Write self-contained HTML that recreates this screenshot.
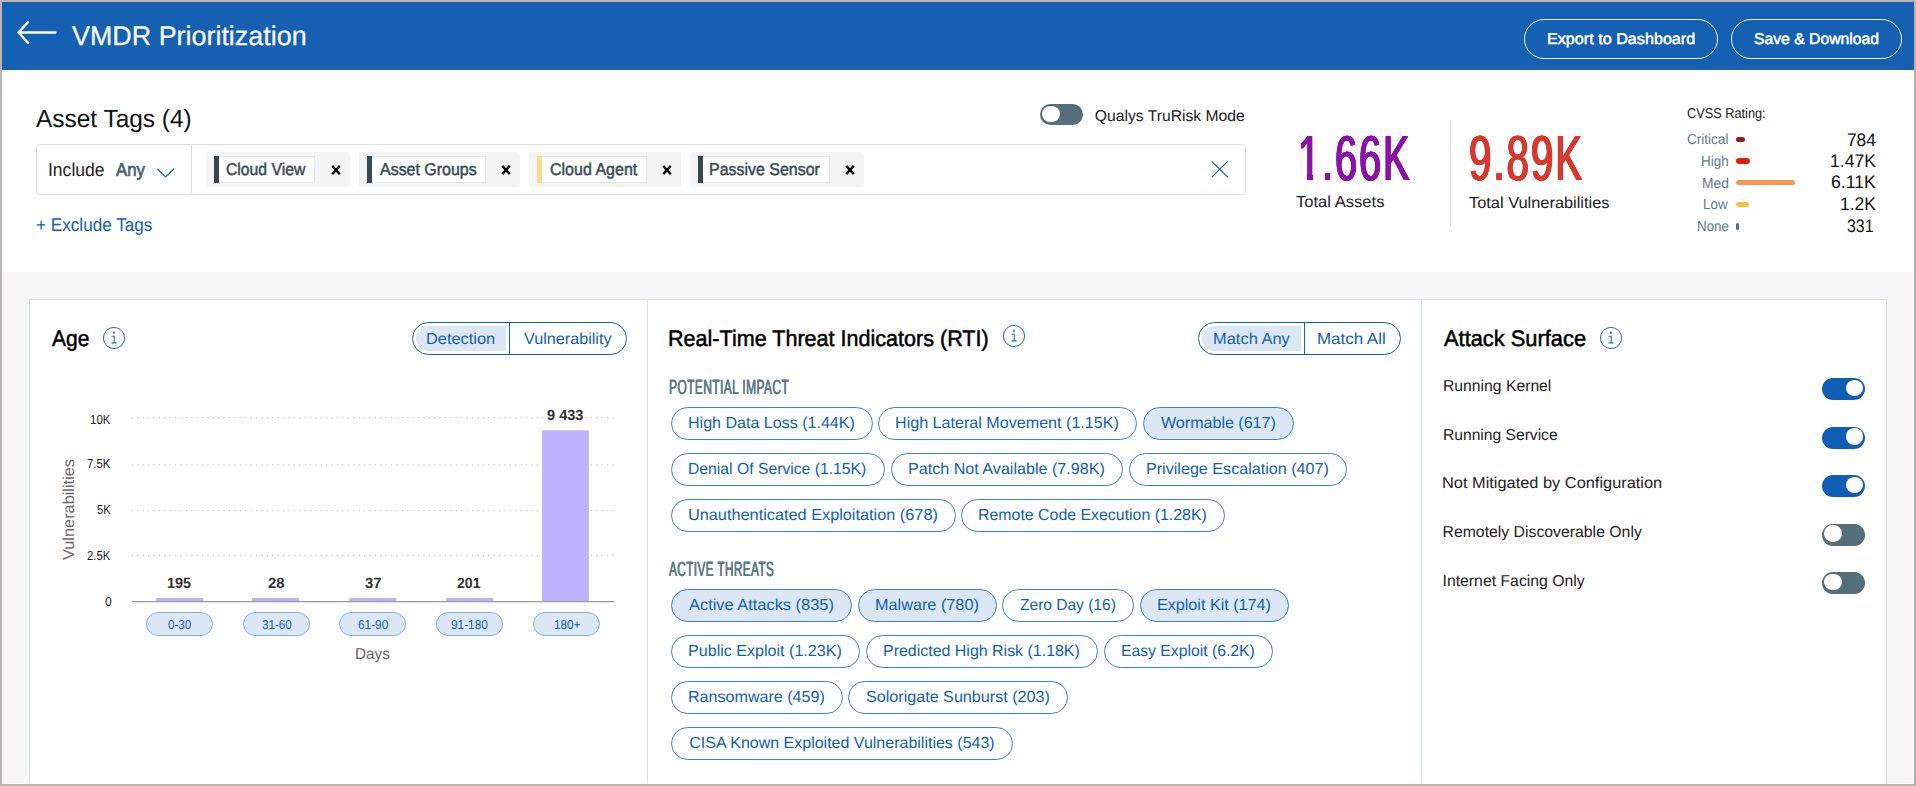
<!DOCTYPE html>
<html lang="en">
<head>
<meta charset="utf-8">
<title>VMDR Prioritization</title>
<style>
html,body{margin:0;padding:0;}
html{width:1916px;height:786px;overflow:hidden;}
body{width:1916px;height:786px;overflow:hidden;position:relative;background:#f6f6f6;font-family:"Liberation Sans", sans-serif;}
.a{position:absolute;box-sizing:border-box;}
.t{position:absolute;white-space:pre;margin:0;padding:0;text-rendering:geometricPrecision;}
svg{position:absolute;overflow:visible;}
</style>
</head>
<body>
<div class="a" style="left:0px;top:0px;width:1916px;height:786px;background:#f6f6f6;"></div>
<div class="a" style="left:2px;top:70px;width:1912px;height:202px;background:#fff;"></div>
<div class="a" style="left:2px;top:2px;width:1912px;height:68px;background:#1560b0;"></div>
<svg style="left:0;top:0" width="80" height="70"><path d="M55.4 32.5H18.6M28 22.3L18.5 32.5L28 42.8" fill="none" stroke="#fff" stroke-width="2.4" stroke-linecap="round" stroke-linejoin="miter"/></svg>
<div class="a" style="left:1524px;top:19px;width:194px;height:40px;border:1px solid rgba(255,255,255,.92);border-radius:20px;"></div>
<div class="a" style="left:1731px;top:19px;width:171px;height:40px;border:1px solid rgba(255,255,255,.92);border-radius:20px;"></div>
<div class="a" style="left:36px;top:144px;width:1210px;height:51px;background:#fff;border:1px solid #dedede;border-radius:4px;"></div>
<div class="a" style="left:191px;top:145px;width:1px;height:49px;background:#dedede;"></div>
<svg style="left:150px;top:160px" width="30" height="24"><path d="M7.6 9.2L15.6 17L23.6 9.2" fill="none" stroke="#1a60b5" stroke-width="1.25" stroke-linecap="round"/></svg>
<div class="a" style="left:206px;top:152px;width:144px;height:35px;background:#f4f4f4;border-radius:3px;"></div>
<div class="a" style="left:214px;top:156px;width:5px;height:27px;background:#37474f;"></div>
<div class="a" style="left:219px;top:156px;width:96px;height:27px;background:#fff;border:1px solid #e3e8eb;border-left:none;"></div>
<svg style="left:327.5px;top:161.6px" width="16" height="16"><path d="M4.2 3.9L11.8 12.1M11.8 3.9L4.2 12.1" fill="none" stroke="#0a0a0a" stroke-width="2.4"/></svg>
<div class="a" style="left:359px;top:152px;width:161px;height:35px;background:#f4f4f4;border-radius:3px;"></div>
<div class="a" style="left:367px;top:156px;width:5px;height:27px;background:#37474f;"></div>
<div class="a" style="left:372px;top:156px;width:114px;height:27px;background:#fff;border:1px solid #e3e8eb;border-left:none;"></div>
<svg style="left:497.5px;top:161.6px" width="16" height="16"><path d="M4.2 3.9L11.8 12.1M11.8 3.9L4.2 12.1" fill="none" stroke="#0a0a0a" stroke-width="2.4"/></svg>
<div class="a" style="left:529px;top:152px;width:152px;height:35px;background:#f4f4f4;border-radius:3px;"></div>
<div class="a" style="left:537px;top:156px;width:5px;height:27px;background:#fbdc8e;"></div>
<div class="a" style="left:542px;top:156px;width:105px;height:27px;background:#fff;border:1px solid #e3e8eb;border-left:none;"></div>
<svg style="left:658.5px;top:161.6px" width="16" height="16"><path d="M4.2 3.9L11.8 12.1M11.8 3.9L4.2 12.1" fill="none" stroke="#0a0a0a" stroke-width="2.4"/></svg>
<div class="a" style="left:690px;top:152px;width:174px;height:35px;background:#f4f4f4;border-radius:3px;"></div>
<div class="a" style="left:698px;top:156px;width:5px;height:27px;background:#37474f;"></div>
<div class="a" style="left:703px;top:156px;width:127px;height:27px;background:#fff;border:1px solid #e3e8eb;border-left:none;"></div>
<svg style="left:841.5px;top:161.6px" width="16" height="16"><path d="M4.2 3.9L11.8 12.1M11.8 3.9L4.2 12.1" fill="none" stroke="#0a0a0a" stroke-width="2.4"/></svg>
<svg style="left:1205px;top:155px" width="30" height="30"><path d="M6.8 6.3L22.7 22.2M22.7 6.3L6.8 22.2" fill="none" stroke="#1a60b5" stroke-width="1.15"/></svg>
<div class="a" style="left:1040px;top:104px;width:43px;height:21px;background:#546e7a;border-radius:10.5px;"></div>
<div class="a" style="left:1042.4px;top:105.9px;width:17.2px;height:16.4px;background:#fff;border-radius:50%;"></div>
<div class="a" style="left:1450px;top:120px;width:1px;height:106px;background:#dcdcdc;"></div>
<div class="a" style="left:1736px;top:137px;width:9.25px;height:5px;background:#8b1a1a;border-radius:3px;"></div>
<div class="a" style="left:1736px;top:158.25px;width:14px;height:6px;background:#e0200e;border-radius:3px;"></div>
<div class="a" style="left:1736px;top:179.75px;width:59px;height:5.5px;background:#f5974e;border-radius:3px;"></div>
<div class="a" style="left:1736px;top:201.75px;width:13px;height:5.5px;background:#f3c544;border-radius:3px;"></div>
<div class="a" style="left:1736px;top:223px;width:3.2px;height:6.5px;background:#546e7a;border-radius:3px;"></div>
<div class="a" style="left:29px;top:299px;width:1858px;height:487px;background:#fff;border:1px solid #d7e0e7;border-bottom:none;"></div>
<div class="a" style="left:647px;top:300px;width:1px;height:486px;background:#d7e0e7;"></div>
<div class="a" style="left:1421px;top:300px;width:1px;height:486px;background:#d7e0e7;"></div>
<svg style="left:100.55px;top:325.15px" width="26" height="26"><circle cx="13" cy="13" r="10.6" fill="none" stroke="#2a6cbd" stroke-width="1"/><path d="M10.6 11.3h2.6v6.6M10.5 17.9h5.2" fill="none" stroke="#2a6cbd" stroke-width="1.1"/><rect x="11.9" y="6.7" width="2" height="2" fill="#2a6cbd"/></svg>
<div class="a" style="left:412px;top:322px;width:215px;height:33px;background:#fff;border:1px solid #125fb5;border-radius:16.5px;"></div>
<div class="a" style="left:416px;top:326px;width:90px;height:25px;background:#dbe7f4;border-radius:12.5px 0 0 12.5px;"></div>
<div class="a" style="left:509px;top:322px;width:1px;height:33px;background:#125fb5;"></div>
<svg style="left:0;top:0" width="1916" height="786"><path d="M131.7 417.7H613.5" stroke="#c3cdd4" stroke-width="1.3" stroke-dasharray="1.3 4.1" fill="none"/><path d="M131.7 464.8H613.5" stroke="#c3cdd4" stroke-width="1.3" stroke-dasharray="1.3 4.1" fill="none"/><path d="M131.7 510.6H613.5" stroke="#c3cdd4" stroke-width="1.3" stroke-dasharray="1.3 4.1" fill="none"/><path d="M131.7 555.5H613.5" stroke="#c3cdd4" stroke-width="1.3" stroke-dasharray="1.3 4.1" fill="none"/><rect x="156.2" y="598" width="47" height="3.2999999999999545" fill="#bdb2fb"/><rect x="252" y="598" width="47" height="3.2999999999999545" fill="#bdb2fb"/><rect x="349.2" y="598" width="47" height="3.2999999999999545" fill="#bdb2fb"/><rect x="446.2" y="598" width="47" height="3.2999999999999545" fill="#bdb2fb"/><rect x="542" y="430.3" width="46.8" height="170.99999999999994" fill="#bdb2fb"/><path d="M132 601.7H614.5" stroke="#9a9a9a" stroke-width="1.3" fill="none"/></svg>
<div class="a" style="left:146.2px;top:612px;width:67px;height:24px;background:#dbe7f4;border:1px solid #8db2de;border-radius:12px;"></div>
<div class="a" style="left:243px;top:612px;width:67px;height:24px;background:#dbe7f4;border:1px solid #8db2de;border-radius:12px;"></div>
<div class="a" style="left:339.2px;top:612px;width:67px;height:24px;background:#dbe7f4;border:1px solid #8db2de;border-radius:12px;"></div>
<div class="a" style="left:436.2px;top:612px;width:67px;height:24px;background:#dbe7f4;border:1px solid #8db2de;border-radius:12px;"></div>
<div class="a" style="left:533px;top:612px;width:67px;height:24px;background:#dbe7f4;border:1px solid #8db2de;border-radius:12px;"></div>
<svg style="left:1001px;top:323px" width="26" height="26"><circle cx="13" cy="13" r="10.6" fill="none" stroke="#2a6cbd" stroke-width="1"/><path d="M10.6 11.3h2.6v6.6M10.5 17.9h5.2" fill="none" stroke="#2a6cbd" stroke-width="1.1"/><rect x="11.9" y="6.7" width="2" height="2" fill="#2a6cbd"/></svg>
<div class="a" style="left:1198px;top:322px;width:203px;height:33px;background:#fff;border:1px solid #125fb5;border-radius:16.5px;"></div>
<div class="a" style="left:1202px;top:326px;width:99px;height:25px;background:#dbe7f4;border-radius:12.5px 0 0 12.5px;"></div>
<div class="a" style="left:1304px;top:322px;width:1px;height:33px;background:#125fb5;"></div>
<div class="a" style="left:671px;top:407px;width:202px;height:33px;background:#fff;border:1px solid #3f80c6;border-radius:16.5px;"></div>
<div class="a" style="left:878px;top:407px;width:259px;height:33px;background:#fff;border:1px solid #3f80c6;border-radius:16.5px;"></div>
<div class="a" style="left:1143px;top:407px;width:151px;height:33px;background:#dbe7f4;border:1px solid #3f80c6;border-radius:16.5px;"></div>
<div class="a" style="left:671px;top:453px;width:213.5px;height:33px;background:#fff;border:1px solid #3f80c6;border-radius:16.5px;"></div>
<div class="a" style="left:891px;top:453px;width:232px;height:33px;background:#fff;border:1px solid #3f80c6;border-radius:16.5px;"></div>
<div class="a" style="left:1129px;top:453px;width:218px;height:33px;background:#fff;border:1px solid #3f80c6;border-radius:16.5px;"></div>
<div class="a" style="left:671px;top:499px;width:285px;height:33px;background:#fff;border:1px solid #3f80c6;border-radius:16.5px;"></div>
<div class="a" style="left:961px;top:499px;width:264px;height:33px;background:#fff;border:1px solid #3f80c6;border-radius:16.5px;"></div>
<div class="a" style="left:671px;top:589px;width:181px;height:33px;background:#dbe7f4;border:1px solid #3f80c6;border-radius:16.5px;"></div>
<div class="a" style="left:858px;top:589px;width:139px;height:33px;background:#dbe7f4;border:1px solid #3f80c6;border-radius:16.5px;"></div>
<div class="a" style="left:1002px;top:589px;width:132px;height:33px;background:#fff;border:1px solid #3f80c6;border-radius:16.5px;"></div>
<div class="a" style="left:1140px;top:589px;width:149px;height:33px;background:#dbe7f4;border:1px solid #3f80c6;border-radius:16.5px;"></div>
<div class="a" style="left:671px;top:635px;width:189px;height:33px;background:#fff;border:1px solid #3f80c6;border-radius:16.5px;"></div>
<div class="a" style="left:866px;top:635px;width:232px;height:33px;background:#fff;border:1px solid #3f80c6;border-radius:16.5px;"></div>
<div class="a" style="left:1104px;top:635px;width:169px;height:33px;background:#fff;border:1px solid #3f80c6;border-radius:16.5px;"></div>
<div class="a" style="left:671px;top:681px;width:172px;height:33px;background:#fff;border:1px solid #3f80c6;border-radius:16.5px;"></div>
<div class="a" style="left:848px;top:681px;width:220px;height:33px;background:#fff;border:1px solid #3f80c6;border-radius:16.5px;"></div>
<div class="a" style="left:671px;top:727px;width:342px;height:33px;background:#fff;border:1px solid #3f80c6;border-radius:16.5px;"></div>
<svg style="left:1597.5px;top:325.3px" width="26" height="26"><circle cx="13" cy="13" r="10.6" fill="none" stroke="#2a6cbd" stroke-width="1"/><path d="M10.6 11.3h2.6v6.6M10.5 17.9h5.2" fill="none" stroke="#2a6cbd" stroke-width="1.1"/><rect x="11.9" y="6.7" width="2" height="2" fill="#2a6cbd"/></svg>
<div class="a" style="left:1822px;top:378px;width:43px;height:22px;background:#0f5eb5;border-radius:11.0px;"></div>
<div class="a" style="left:1846px;top:379.9px;width:17.2px;height:16.4px;background:#fff;border-radius:50%;"></div>
<div class="a" style="left:1822px;top:426.5px;width:43px;height:22px;background:#0f5eb5;border-radius:11.0px;"></div>
<div class="a" style="left:1846px;top:428.4px;width:17.2px;height:16.4px;background:#fff;border-radius:50%;"></div>
<div class="a" style="left:1822px;top:475px;width:43px;height:22px;background:#0f5eb5;border-radius:11.0px;"></div>
<div class="a" style="left:1846px;top:476.9px;width:17.2px;height:16.4px;background:#fff;border-radius:50%;"></div>
<div class="a" style="left:1822px;top:523.5px;width:43px;height:22px;background:#546e7a;border-radius:11.0px;"></div>
<div class="a" style="left:1824.4px;top:525.4px;width:17.2px;height:16.4px;background:#fff;border-radius:50%;"></div>
<div class="a" style="left:1822px;top:572px;width:43px;height:22px;background:#546e7a;border-radius:11.0px;"></div>
<div class="a" style="left:1824.4px;top:573.9px;width:17.2px;height:16.4px;background:#fff;border-radius:50%;"></div>
<div class="a" style="left:2px;top:272px;width:1px;height:512px;background:#fcfcfc;"></div>
<div class="a" style="left:1913px;top:272px;width:1px;height:512px;background:#fcfcfc;"></div>
<div class="a" style="left:2px;top:783px;width:1912px;height:1px;background:#fcfcfc;"></div>
<div class="a" style="left:0px;top:0px;width:1916px;height:2px;background:#b9b4b2;"></div>
<div class="a" style="left:0px;top:0px;width:2px;height:786px;background:#b9b4b2;"></div>
<div class="a" style="left:1914px;top:0px;width:2px;height:786px;background:#b7b3b1;"></div>
<div class="a" style="left:0px;top:784px;width:1916px;height:2px;background:#b7b3b1;"></div>
<div class="t" style="left:72.00px;top:21.00px;font-size:26.9px;line-height:30px;color:#f6f6f6;-webkit-text-stroke:0.3px #f6f6f6;">VMDR Prioritization</div>
<div class="t" style="left:1546.56px;top:31.00px;font-size:15.6px;line-height:17px;color:#fff;-webkit-text-stroke:0.5px #fff;transform-origin:0 0;transform:scaleX(1.0364);">Export to Dashboard</div>
<div class="t" style="left:1753.80px;top:31.00px;font-size:15.6px;line-height:17px;color:#fff;-webkit-text-stroke:0.5px #fff;transform-origin:0 0;transform:scaleX(1.0090);">Save &amp; Download</div>
<div class="t" style="left:36.30px;top:106.00px;font-size:24.8px;line-height:27px;color:#111;transform-origin:0 0;transform:scaleX(0.9855);">Asset Tags (4)</div>
<div class="t" style="left:47.61px;top:159.00px;font-size:18.6px;line-height:21px;color:#222;transform-origin:0 0;transform:scaleX(0.9426);">Include</div>
<div class="t" style="left:116.30px;top:159.00px;font-size:18.6px;line-height:21px;color:#4a5f6d;-webkit-text-stroke:0.7px #4a5f6d;transform-origin:0 0;transform:scaleX(0.9040);">Any</div>
<div class="t" style="left:225.80px;top:160.00px;font-size:17px;line-height:19px;color:#3b4c58;-webkit-text-stroke:0.5px #3b4c58;transform-origin:0 0;transform:scaleX(0.9259);">Cloud View</div>
<div class="t" style="left:379.80px;top:160.00px;font-size:17px;line-height:19px;color:#3b4c58;-webkit-text-stroke:0.5px #3b4c58;transform-origin:0 0;transform:scaleX(0.9391);">Asset Groups</div>
<div class="t" style="left:549.80px;top:160.00px;font-size:17px;line-height:19px;color:#3b4c58;-webkit-text-stroke:0.5px #3b4c58;transform-origin:0 0;transform:scaleX(0.9418);">Cloud Agent</div>
<div class="t" style="left:709.36px;top:160.00px;font-size:17px;line-height:19px;color:#3b4c58;-webkit-text-stroke:0.5px #3b4c58;transform-origin:0 0;transform:scaleX(0.9387);">Passive Sensor</div>
<div class="t" style="left:35.50px;top:214.00px;font-size:18.4px;line-height:21px;color:#125fb5;transform-origin:0 0;transform:scaleX(0.9318);">+ Exclude Tags</div>
<div class="t" style="left:1094.80px;top:108.00px;font-size:15.7px;line-height:17px;color:#222;">Qualys TruRisk Mode</div>
<div class="t" style="left:1297.57px;top:124.00px;font-size:63.5px;line-height:70px;color:#8a12a6;letter-spacing:3px;text-shadow:0.42px 0 0 #8a12a6,-0.42px 0 0 #8a12a6,0.83px 0 0 #8a12a6,-0.83px 0 0 #8a12a6,1.25px 0 0 #8a12a6,-1.25px 0 0 #8a12a6;transform-origin:0 0;transform:scaleX(0.6275);">1.66K</div>
<div class="t" style="left:1296.05px;top:194.00px;font-size:16px;line-height:17px;color:#222;transform-origin:0 0;transform:scaleX(1.0366);">Total Assets</div>
<div class="t" style="left:1469.32px;top:124.00px;font-size:63.5px;line-height:70px;color:#d8392f;letter-spacing:3px;text-shadow:0.42px 0 0 #d8392f,-0.42px 0 0 #d8392f,0.83px 0 0 #d8392f,-0.83px 0 0 #d8392f,1.25px 0 0 #d8392f,-1.25px 0 0 #d8392f;transform-origin:0 0;transform:scaleX(0.6359);">9.89K</div>
<div class="t" style="left:1468.80px;top:195.00px;font-size:16px;line-height:17px;color:#222;transform-origin:0 0;transform:scaleX(1.0236);">Total Vulnerabilities</div>
<div class="t" style="left:1687.30px;top:106.00px;font-size:14.2px;line-height:16px;color:#222;transform-origin:0 0;transform:scaleX(0.8979);">CVSS Rating:</div>
<div class="t" style="left:1687.30px;top:132.00px;font-size:14.4px;line-height:16px;color:#607d8b;transform-origin:0 0;transform:scaleX(0.9423);">Critical</div>
<div class="t" style="left:1847.30px;top:130.00px;font-size:18.2px;line-height:20px;color:#111;transform-origin:0 0;transform:scaleX(0.9510);">784</div>
<div class="t" style="left:1700.86px;top:154.00px;font-size:14.4px;line-height:16px;color:#607d8b;transform-origin:0 0;transform:scaleX(0.9355);">High</div>
<div class="t" style="left:1830.34px;top:151.00px;font-size:18.2px;line-height:20px;color:#111;transform-origin:0 0;transform:scaleX(0.9645);">1.47K</div>
<div class="t" style="left:1701.59px;top:176.00px;font-size:14.4px;line-height:16px;color:#607d8b;transform-origin:0 0;transform:scaleX(0.9633);">Med</div>
<div class="t" style="left:1831.30px;top:172.00px;font-size:18.2px;line-height:20px;color:#111;transform-origin:0 0;transform:scaleX(0.9718);">6.11K</div>
<div class="t" style="left:1703.37px;top:197.00px;font-size:14.4px;line-height:16px;color:#607d8b;transform-origin:0 0;transform:scaleX(0.9324);">Low</div>
<div class="t" style="left:1840.34px;top:194.00px;font-size:18.2px;line-height:20px;color:#111;transform-origin:0 0;transform:scaleX(0.9577);">1.2K</div>
<div class="t" style="left:1696.62px;top:219.00px;font-size:14.4px;line-height:16px;color:#607d8b;transform-origin:0 0;transform:scaleX(0.9282);">None</div>
<div class="t" style="left:1847.30px;top:216.00px;font-size:18.2px;line-height:20px;color:#111;transform-origin:0 0;transform:scaleX(0.8766);">331</div>
<div class="t" style="left:51.50px;top:326.00px;font-size:22.5px;line-height:25px;color:#000;-webkit-text-stroke:0.5px #000;transform-origin:0 0;transform:scaleX(0.9337);">Age</div>
<div class="t" style="left:426.28px;top:331.00px;font-size:16px;line-height:17px;color:#125fb5;transform-origin:0 0;transform:scaleX(1.0229);">Detection</div>
<div class="t" style="left:524.00px;top:331.00px;font-size:16px;line-height:17px;color:#125fb5;transform-origin:0 0;transform:scaleX(1.0108);">Vulnerability</div>
<div class="t" style="left:90.30px;top:412.00px;font-size:13px;line-height:15px;color:#222;transform-origin:0 0;transform:scaleX(0.8824);">10K</div>
<div class="t" style="left:87.30px;top:456.00px;font-size:13px;line-height:15px;color:#222;transform-origin:0 0;transform:scaleX(0.8755);">7.5K</div>
<div class="t" style="left:97.00px;top:502.00px;font-size:13px;line-height:15px;color:#222;transform-origin:0 0;transform:scaleX(0.8626);">5K</div>
<div class="t" style="left:87.30px;top:548.00px;font-size:13px;line-height:15px;color:#222;transform-origin:0 0;transform:scaleX(0.8755);">2.5K</div>
<div class="t" style="left:104.50px;top:594.00px;font-size:13px;line-height:15px;color:#222;transform-origin:0 0;transform:scaleX(0.9286);">0</div>
<div class="t" style="left:73.80px;top:547.00px;font-size:16px;line-height:17px;color:#6a6a6a;transform-origin:0.00px 13px;transform:rotate(-90deg) scaleX(1.0200);">Vulnerabilities</div>
<div class="t" style="left:167.30px;top:576.00px;font-size:14.8px;line-height:16px;color:#333;font-weight:700;transform-origin:0 0;transform:scaleX(0.9731);">195</div>
<div class="t" style="left:267.75px;top:576.00px;font-size:14.8px;line-height:16px;color:#333;font-weight:700;transform-origin:0 0;transform:scaleX(1.0044);">28</div>
<div class="t" style="left:364.75px;top:576.00px;font-size:14.8px;line-height:16px;color:#333;font-weight:700;transform-origin:0 0;transform:scaleX(1.0044);">37</div>
<div class="t" style="left:456.85px;top:576.00px;font-size:14.8px;line-height:16px;color:#333;font-weight:700;transform-origin:0 0;transform:scaleX(0.9526);">201</div>
<div class="t" style="left:547.30px;top:408.00px;font-size:14.8px;line-height:16px;color:#333;font-weight:700;transform-origin:0 0;transform:scaleX(0.9837);">9 433</div>
<div class="t" style="left:168.10px;top:617.00px;font-size:13px;line-height:15px;color:#125fb5;transform-origin:0 0;transform:scaleX(0.8919);">0-30</div>
<div class="t" style="left:261.60px;top:617.00px;font-size:13px;line-height:15px;color:#125fb5;transform-origin:0 0;transform:scaleX(0.8965);">31-60</div>
<div class="t" style="left:357.60px;top:617.00px;font-size:13px;line-height:15px;color:#125fb5;transform-origin:0 0;transform:scaleX(0.9086);">61-90</div>
<div class="t" style="left:451.30px;top:617.00px;font-size:13px;line-height:15px;color:#125fb5;transform-origin:0 0;transform:scaleX(0.9093);">91-180</div>
<div class="t" style="left:553.50px;top:617.00px;font-size:13px;line-height:15px;color:#125fb5;transform-origin:0 0;transform:scaleX(0.8993);">180+</div>
<div class="t" style="left:355.13px;top:646.00px;font-size:15.8px;line-height:17px;color:#666;transform-origin:0 0;transform:scaleX(0.9689);">Days</div>
<div class="t" style="left:668.34px;top:326.00px;font-size:22.5px;line-height:25px;color:#000;-webkit-text-stroke:0.5px #000;transform-origin:0 0;transform:scaleX(0.9582);">Real-Time Threat Indicators (RTI)</div>
<div class="t" style="left:1212.52px;top:331.00px;font-size:16px;line-height:17px;color:#125fb5;transform-origin:0 0;transform:scaleX(1.0278);">Match Any</div>
<div class="t" style="left:1317.49px;top:331.00px;font-size:16px;line-height:17px;color:#125fb5;transform-origin:0 0;transform:scaleX(1.0575);">Match All</div>
<div class="t" style="left:668.89px;top:376.00px;font-size:20.6px;line-height:23px;color:#5f7b89;letter-spacing:0.6px;text-shadow:0.30px 0 0 #5f7b89,-0.30px 0 0 #5f7b89;transform-origin:0 0;transform:scaleX(0.5851);">POTENTIAL IMPACT</div>
<div class="t" style="left:669.47px;top:558.00px;font-size:20.6px;line-height:23px;color:#5f7b89;letter-spacing:0.6px;text-shadow:0.30px 0 0 #5f7b89,-0.30px 0 0 #5f7b89;transform-origin:0 0;transform:scaleX(0.5756);">ACTIVE THREATS</div>
<div class="t" style="left:688.30px;top:415.00px;font-size:16px;line-height:17px;color:#125fb5;transform-origin:0 0;transform:scaleX(1.0032);">High Data Loss (1.44K)</div>
<div class="t" style="left:895.29px;top:415.00px;font-size:16px;line-height:17px;color:#125fb5;transform-origin:0 0;transform:scaleX(1.0068);">High Lateral Movement (1.15K)</div>
<div class="t" style="left:1161.30px;top:415.00px;font-size:16px;line-height:17px;color:#125fb5;transform-origin:0 0;transform:scaleX(1.0036);">Wormable (617)</div>
<div class="t" style="left:688.32px;top:461.00px;font-size:16px;line-height:17px;color:#125fb5;transform-origin:0 0;transform:scaleX(0.9829);">Denial Of Service (1.15K)</div>
<div class="t" style="left:908.29px;top:461.00px;font-size:16px;line-height:17px;color:#125fb5;transform-origin:0 0;transform:scaleX(1.0075);">Patch Not Available (7.98K)</div>
<div class="t" style="left:1146.29px;top:461.00px;font-size:16px;line-height:17px;color:#125fb5;transform-origin:0 0;transform:scaleX(1.0078);">Privilege Escalation (407)</div>
<div class="t" style="left:688.28px;top:507.00px;font-size:16px;line-height:17px;color:#125fb5;transform-origin:0 0;transform:scaleX(1.0178);">Unauthenticated Exploitation (678)</div>
<div class="t" style="left:978.31px;top:507.00px;font-size:16px;line-height:17px;color:#125fb5;transform-origin:0 0;transform:scaleX(0.9934);">Remote Code Execution (1.28K)</div>
<div class="t" style="left:689.30px;top:597.00px;font-size:16px;line-height:17px;color:#125fb5;transform-origin:0 0;transform:scaleX(1.0244);">Active Attacks (835)</div>
<div class="t" style="left:875.28px;top:597.00px;font-size:16px;line-height:17px;color:#125fb5;transform-origin:0 0;transform:scaleX(1.0156);">Malware (780)</div>
<div class="t" style="left:1020.30px;top:597.00px;font-size:16px;line-height:17px;color:#125fb5;transform-origin:0 0;transform:scaleX(0.9709);">Zero Day (16)</div>
<div class="t" style="left:1157.29px;top:597.00px;font-size:16px;line-height:17px;color:#125fb5;transform-origin:0 0;transform:scaleX(1.0080);">Exploit Kit (174)</div>
<div class="t" style="left:688.29px;top:643.00px;font-size:16px;line-height:17px;color:#125fb5;transform-origin:0 0;transform:scaleX(1.0057);">Public Exploit (1.23K)</div>
<div class="t" style="left:883.30px;top:643.00px;font-size:16px;line-height:17px;color:#125fb5;transform-origin:0 0;transform:scaleX(0.9970);">Predicted High Risk (1.18K)</div>
<div class="t" style="left:1121.32px;top:643.00px;font-size:16px;line-height:17px;color:#125fb5;transform-origin:0 0;transform:scaleX(0.9835);">Easy Exploit (6.2K)</div>
<div class="t" style="left:688.29px;top:689.00px;font-size:16px;line-height:17px;color:#125fb5;transform-origin:0 0;transform:scaleX(1.0057);">Ransomware (459)</div>
<div class="t" style="left:866.30px;top:689.00px;font-size:16px;line-height:17px;color:#125fb5;transform-origin:0 0;transform:scaleX(1.0082);">Solorigate Sunburst (203)</div>
<div class="t" style="left:689.30px;top:735.00px;font-size:16px;line-height:17px;color:#125fb5;">CISA Known Exploited Vulnerabilities (543)</div>
<div class="t" style="left:1443.50px;top:326.00px;font-size:22.5px;line-height:25px;color:#000;-webkit-text-stroke:0.5px #000;transform-origin:0 0;transform:scaleX(0.9712);">Attack Surface</div>
<div class="t" style="left:1442.51px;top:378.00px;font-size:15.8px;line-height:17px;color:#222;transform-origin:0 0;transform:scaleX(0.9950);">Running Kernel</div>
<div class="t" style="left:1442.51px;top:427.00px;font-size:15.8px;line-height:17px;color:#222;transform-origin:0 0;transform:scaleX(0.9889);">Running Service</div>
<div class="t" style="left:1442.46px;top:475.00px;font-size:15.8px;line-height:17px;color:#222;transform-origin:0 0;transform:scaleX(1.0363);">Not Mitigated by Configuration</div>
<div class="t" style="left:1442.50px;top:524.00px;font-size:15.8px;line-height:17px;color:#222;">Remotely Discoverable Only</div>
<div class="t" style="left:1442.50px;top:573.00px;font-size:15.8px;line-height:17px;color:#222;">Internet Facing Only</div>
<div class="a" style="left:1298px;top:175px;width:9px;height:6px;background:#fff"></div><div class="a" style="left:1313px;top:175px;width:8px;height:6px;background:#fff"></div>
</body>
</html>
